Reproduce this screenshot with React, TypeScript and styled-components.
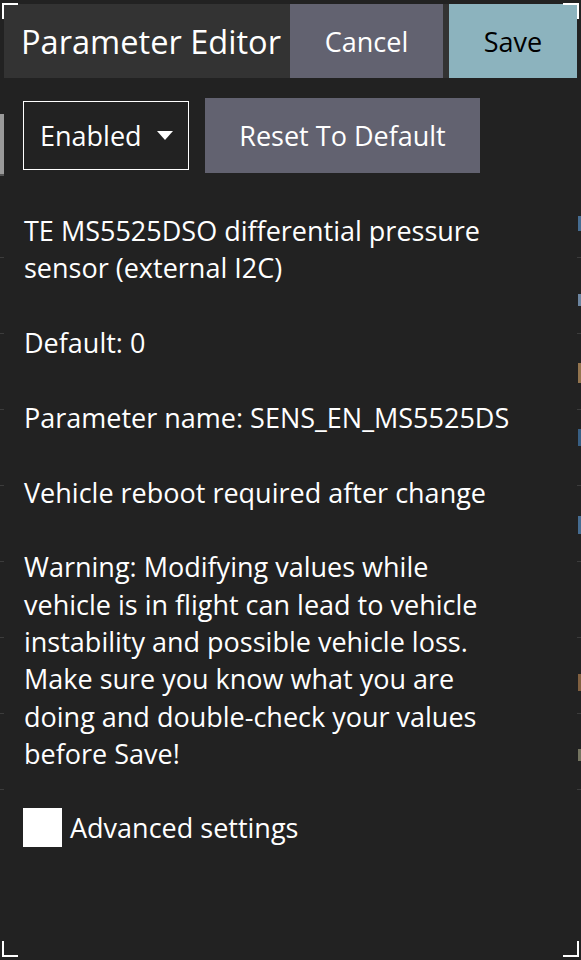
import React from "react";
import styled, { createGlobalStyle } from "styled-components";

const GlobalStyle = createGlobalStyle`
  html, body {
    margin: 0;
    padding: 0;
    background: #222222;
  }
  body {
    font-family: "Open Sans", "Noto Sans", sans-serif;
    color: #ffffff;
  }
`;

const Page = styled.div`
  position: relative;
  width: 581px;
  height: 960px;
  display: flex;
  overflow: hidden;
  background: #222222;
`;

const Strip = styled.div<{ $top: number }>`
  width: 4px;
  flex: none;
  display: flex;
  flex-direction: column;
  padding-top: ${(p) => p.$top}px;
`;

const ScrollThumb = styled.div`
  height: 60px;
  width: 4px;
  background: #9a9a9a;
  border-bottom: 2px solid #555555;
  margin-bottom: 81px;
`;

const BackRow = styled.div<{ $line?: boolean }>`
  height: 76px;
  flex: none;
  box-sizing: border-box;
  border-top: 1px solid ${(p) => (p.$line === false ? "transparent" : "#3c3c3c")};
  display: flex;
  align-items: flex-start;
`;

const Mark = styled.span<{ $color: string; $offset: number; $h: number }>`
  display: block;
  margin-top: ${(p) => p.$offset}px;
  margin-left: 1px;
  width: 3px;
  height: ${(p) => p.$h}px;
  background: ${(p) => p.$color};
  opacity: 0.8;
`;

const Dialog = styled.div`
  flex: 1;
  display: flex;
  flex-direction: column;
  padding-top: 4px;
`;

const Header = styled.div`
  height: 74px;
  display: flex;
  background: #333333;
  gap: 6px;
`;

const Title = styled.div`
  flex: 1;
  display: flex;
  align-items: center;
  padding-left: 17px;
  font-size: 32.6px;
  white-space: nowrap;
`;

const Button = styled.button<{ $primary?: boolean; $w: number }>`
  width: ${(p) => p.$w}px;
  border: none;
  margin: 0;
  padding: 0;
  font-family: inherit;
  font-size: 27px;
  color: ${(p) => (p.$primary ? "#000000" : "#ffffff")};
  background: ${(p) => (p.$primary ? "#8cb3be" : "#626270")};
  cursor: pointer;
`;

const Content = styled.div`
  padding: 20px 19px 0 19px;
  display: flex;
  flex-direction: column;
  font-size: 27px;
  line-height: 37.36px;
`;

const Controls = styled.div`
  display: flex;
  align-items: center;
  gap: 16px;
`;

const Select = styled.div`
  width: 166px;
  height: 69px;
  box-sizing: border-box;
  border: 1px solid #ffffff;
  display: flex;
  align-items: center;
  justify-content: space-between;
  padding: 0 15px 0 16px;
`;

const Caret = styled.span`
  width: 0;
  height: 0;
  border-left: 8px solid transparent;
  border-right: 8px solid transparent;
  border-top: 9px solid #ffffff;
`;

const ResetButton = styled(Button)`
  height: 75px;
`;

const Description = styled.div`
  margin-top: 39px;
  width: 495px;
  display: flex;
  flex-direction: column;
  gap: 37.36px;
  padding-left: 1px;
`;

const Paragraph = styled.p`
  margin: 0;
`;

const CheckRow = styled.label`
  margin-top: 36px;
  display: flex;
  align-items: center;
  gap: 8px;
`;

const CheckBox = styled.span`
  width: 39px;
  height: 39px;
  background: #ffffff;
  flex: none;
`;

const Corner = styled.span<{ $v: "top" | "bottom"; $h: "left" | "right" }>`
  position: absolute;
  width: 14px;
  height: 14px;
  ${(p) => p.$v}: 3px;
  ${(p) => p.$h}: 2px;
  border-${(p) => p.$v}: 2px solid #ffffff;
  border-${(p) => p.$h}: 2px solid #ffffff;
`;

const rightMarks = [
  { color: "#4f7fae", offset: 34, h: 15 },
  { color: "#7f9fc0", offset: 36, h: 12 },
  { color: "#b08a5a", offset: 29, h: 20 },
  { color: "#3f6f9e", offset: 19, h: 17 },
  { color: "#4f7fae", offset: 30, h: 18 },
  { color: "transparent", offset: 0, h: 0 },
  { color: "#9a7048", offset: 36, h: 17 },
  { color: "#8a8a70", offset: 35, h: 12 },
  { color: "transparent", offset: 0, h: 0 },
];

export default function App() {
  return (
    <>
      <GlobalStyle />
      <Page>
        <Strip $top={114}>
          <ScrollThumb />
          {Array.from({ length: 8 }).map((_, i) => (
            <BackRow key={i} />
          ))}
        </Strip>
        <Dialog>
          <Header>
            <Title>Parameter Editor</Title>
            <Button $w={153}>Cancel</Button>
            <Button $w={128} $primary>
              Save
            </Button>
          </Header>
          <Content>
            <Controls>
              <Select>
                <span>Enabled</span>
                <Caret />
              </Select>
              <ResetButton $w={275}>Reset To Default</ResetButton>
            </Controls>
            <Description>
              <Paragraph>TE MS5525DSO differential pressure sensor (external I2C)</Paragraph>
              <Paragraph>Default: 0</Paragraph>
              <Paragraph>Parameter name: SENS_EN_MS5525DS</Paragraph>
              <Paragraph>Vehicle reboot required after change</Paragraph>
              <Paragraph>
                Warning: Modifying values while vehicle is in flight can lead to vehicle instability
                and possible vehicle loss. Make sure you know what you are doing and double-check
                your values before Save!
              </Paragraph>
            </Description>
            <CheckRow>
              <CheckBox />
              Advanced settings
            </CheckRow>
          </Content>
        </Dialog>
        <Strip $top={181}>
          {rightMarks.map((m, i) => (
            <BackRow key={i} $line={i > 0}>
              <Mark $color={m.color} $offset={m.offset} $h={m.h} />
            </BackRow>
          ))}
        </Strip>
        <Corner $v="top" $h="left" />
        <Corner $v="top" $h="right" />
        <Corner $v="bottom" $h="left" />
        <Corner $v="bottom" $h="right" />
      </Page>
    </>
  );
}
